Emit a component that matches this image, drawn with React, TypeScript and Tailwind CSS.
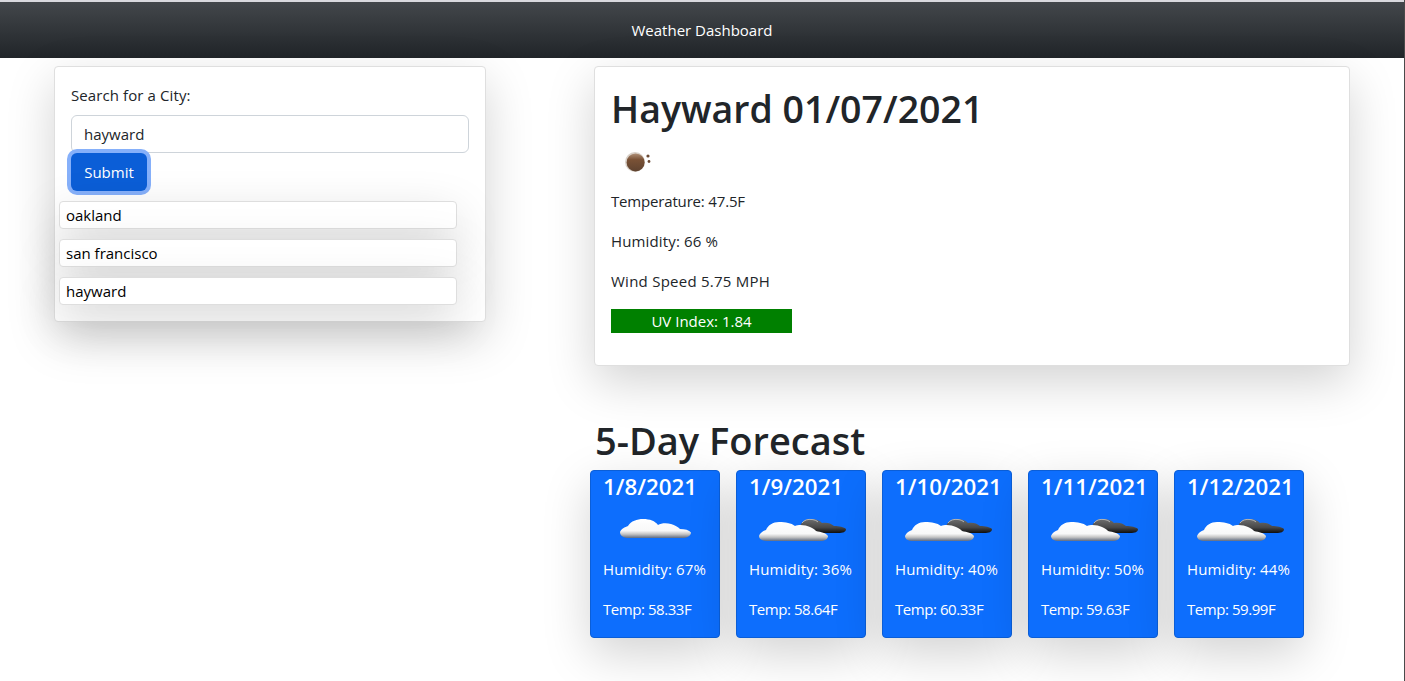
const cities = ["oakland", "san francisco", "hayward"];

const forecast = [
  { date: "1/8/2021", humidity: "67%", temp: "58.33F", dark: false },
  { date: "1/9/2021", humidity: "36%", temp: "58.64F", dark: true },
  { date: "1/10/2021", humidity: "40%", temp: "60.33F", dark: true },
  { date: "1/11/2021", humidity: "50%", temp: "59.63F", dark: true },
  { date: "1/12/2021", humidity: "44%", temp: "59.99F", dark: true },
];

function MoonIcon() {
  return (
    <svg width="30" height="24" viewBox="0 0 30 24" className="block">
      <defs>
        <linearGradient id="moon" x1="0" y1="0" x2="0" y2="1">
          <stop offset="0" stopColor="#b09078" />
          <stop offset="0.35" stopColor="#7a5236" />
          <stop offset="1" stopColor="#5f4330" />
        </linearGradient>
      </defs>
      <circle cx="12" cy="13" r="10" fill="#d8d0c8" />
      <circle cx="12.6" cy="13.4" r="9" fill="url(#moon)" />
      <circle cx="25" cy="7" r="1.6" fill="#6b4a35" />
      <circle cx="26" cy="12.5" r="1.4" fill="#6b4a35" />
    </svg>
  );
}

function CloudIcon({ dark, index }: { dark: boolean; index: number }) {
  const id = `cloud-${index}`;
  return (
    <svg width="90" height="30" viewBox="0 0 90 30" className="block">
      <defs>
        <linearGradient id={id} x1="0" y1="0" x2="0" y2="1">
          <stop offset="0" stopColor="#ffffff" />
          <stop offset="0.62" stopColor="#f8f8f8" />
          <stop offset="0.8" stopColor="#c4c4c4" />
          <stop offset="1" stopColor="#5f6b80" />
        </linearGradient>
        <linearGradient id={`${id}-d`} x1="0" y1="0" x2="0" y2="1">
          <stop offset="0" stopColor="#6e6e6e" />
          <stop offset="0.6" stopColor="#484848" />
          <stop offset="1" stopColor="#0e0e0e" />
        </linearGradient>
      </defs>
      {dark ? (
        <>
          <path
            d="M42 16C43 11 47 8 53 8C58 8 61 9 64 12C68 11 73 12 76 15C81 15 86 16 88 18C88 21 85 22 80 22H50C45 22 42 20 42 16Z"
            fill={`url(#${id}-d)`}
          />
          <path d="M44 12C46 9 50 8 54 8.500C57 8.800 59 10 60 11" fill="none" stroke="#b4b4b4" strokeWidth="1" />
          <path
            d="M1 25C2 22 5 20 8 19C10 14 15 11 21 11C28 11 33 12 37 15C41 13 48 14 52 16C55 17 57 19 58 20C63 21 68 22 70 25C70 28 67 30 62 30H9C4 30 1 28 1 25Z"
            fill={`url(#${id})`}
          />
        </>
      ) : (
        <path
          d="M8 21C9 18 13 16 16 15C19 10 25 8 31 8C38 8 43 10 46 14C49 12 55 12 59 13C63 14 66 16 68 18C73 18 77 19 79 21.500C79 25 75 27 70 27H17C12 27 8 25 8 21Z"
          fill={`url(#${id})`}
        />
      )}
    </svg>
  );
}

export default function App() {
  return (
    <div className="min-h-[681px] bg-white border-r border-[#4a4a4a] text-[#212529] font-['Open_Sans','Noto_Sans',sans-serif] text-[16px] overflow-hidden">
      <div className="h-[2px] bg-[#d9d9de]" />
      <header className="h-[56px] flex items-center justify-center bg-gradient-to-b from-[#43474b] to-[#212529] text-white text-[15px]">
        Weather Dashboard
      </header>

      <main className="flex items-start pt-2 pl-[54px]">
        <section className="w-[432px] h-[256px] bg-white border border-[#dfdfdf] rounded shadow-[0_16px_48px_rgba(0,0,0,0.175)]">
          <div className="px-4 pt-4">
            <label className="block text-[15px] leading-6 mb-2 tracking-[0.1px]">Search for a City:</label>
            <div className="w-[398px] h-[38px] border border-[#ced4da] rounded-md pl-3 flex items-center text-[15px] text-[#212529]">
              hayward
            </div>
            <button className="block w-[76px] h-[38px] bg-[#0b5ed7] text-white text-[15px] rounded-md ring-4 ring-[#86b0fa]">
              Submit
            </button>
          </div>
          <ul className="mt-[10px] ml-1 flex flex-col gap-[10px]">
            {cities.map((city) => (
              <li
                key={city}
                className="w-[398px] h-[28px] bg-white border border-[#dedede] rounded pl-[6px] flex items-center text-[15px] text-black shadow-[0_16px_48px_rgba(0,0,0,0.175)]"
              >
                {city}
              </li>
            ))}
          </ul>
        </section>

        <div className="ml-[108px] w-[756px]">
          <section className="h-[300px] bg-white border border-[#dfdfdf] rounded shadow-[0_16px_48px_rgba(0,0,0,0.175)] px-4 pt-[18px]">
            <h1 className="text-[37.5px] leading-[48px] font-semibold">Hayward 01/07/2021</h1>
            <div className="ml-[12px] mt-[13px] h-[30px] flex items-center">
              <MoonIcon />
            </div>
            <p className="mt-[13px] text-[15px] leading-6 tracking-[-0.17px]">Temperature: 47.5F</p>
            <p className="mt-4 text-[15px] leading-6 tracking-[0.15px]">Humidity: 66 %</p>
            <p className="mt-4 text-[15px] leading-6 tracking-[0.25px]">Wind Speed 5.75 MPH</p>
            <div className="mt-4 w-[181px] h-6 bg-[#008000] text-white text-[15px] leading-6 text-center">
              UV Index: 1.84
            </div>
          </section>

          <h2 className="mt-[50px] ml-px text-[38px] leading-[48px] font-semibold">5-Day Forecast</h2>

          <div className="-ml-1 mt-[6px] flex gap-4">
            {forecast.map((day, i) => (
              <article
                key={day.date}
                className="w-[130px] h-[168px] bg-[#0d6efd] border border-[#0b5ed7] rounded text-white px-3 shadow-[0_16px_48px_rgba(0,0,0,0.175)]"
              >
                <h3 className="text-[22.3px] leading-[32px] font-semibold whitespace-nowrap">{day.date}</h3>
                <div className="h-[40px] ml-[9px] mt-[3px] flex items-center">
                  <CloudIcon dark={day.dark} index={i} />
                </div>
                <p className="mt-[11px] text-[15px] leading-6 whitespace-nowrap tracking-[0.15px]">Humidity: {day.humidity}</p>
                <p className="mt-4 text-[15px] leading-6 whitespace-nowrap tracking-[-0.45px]">Temp: {day.temp}</p>
              </article>
            ))}
          </div>
        </div>
      </main>
    </div>
  );
}
